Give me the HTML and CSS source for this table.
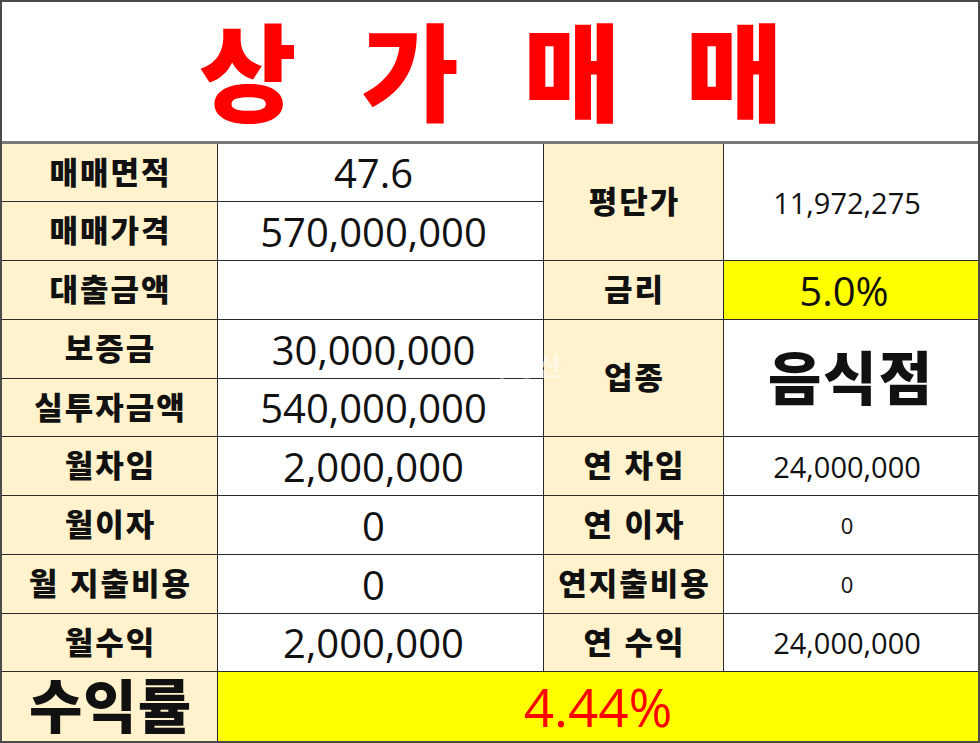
FILE: index.html
```html
<!DOCTYPE html>
<html lang="ko">
<head>
<meta charset="utf-8">
<title>상가매매</title>
<link rel="stylesheet" href="styles.css">
</head>
<body>
<div class="sheet">
  <div class="title">상 가 매 매</div>
  <div class="grid">
    <div class="lab">매매면적</div>
    <div class="val">47.6</div>
    <div class="lab tall">평단가</div>
    <div class="val small tall">11,972,275</div>

    <div class="lab">매매가격</div>
    <div class="val">570,000,000</div>

    <div class="lab">대출금액</div>
    <div class="val"></div>
    <div class="lab">금리</div>
    <div class="val yellow">5.0%</div>

    <div class="lab">보증금</div>
    <div class="val">30,000,000</div>
    <div class="lab tall">업종</div>
    <div class="val big tall">음식점</div>

    <div class="lab">실투자금액</div>
    <div class="val">540,000,000</div>

    <div class="lab">월차임</div>
    <div class="val">2,000,000</div>
    <div class="lab">연 차임</div>
    <div class="val small">24,000,000</div>

    <div class="lab">월이자</div>
    <div class="val">0</div>
    <div class="lab">연 이자</div>
    <div class="val tiny">0</div>

    <div class="lab">월 지출비용</div>
    <div class="val">0</div>
    <div class="lab">연지출비용</div>
    <div class="val tiny">0</div>

    <div class="lab">월수익</div>
    <div class="val">2,000,000</div>
    <div class="lab">연 수익</div>
    <div class="val small">24,000,000</div>

    <div class="lab huge">수익률</div>
    <div class="val yellow rate">4.44%</div>
  </div>
  <div class="watermark">부동산</div>
</div>
</body>
</html>
```

FILE: styles.css
```css
* { box-sizing: border-box; }
html, body { margin: 0; padding: 0; background: #fff; }
.sheet {
  position: relative;
  width: 980px;
  height: 743px;
  border: 2px solid #4a4a4a;
  overflow: hidden;
  display: flex;
  flex-direction: column;
}
.title {
  height: 142px;
  flex: none;
  border-bottom: 3px solid #7a7a7a;
  text-align: center;
  color: #ff0000;
  font-family: "Noto Sans CJK KR", sans-serif;
  font-weight: 900;
  font-size: 106px;
  line-height: 124px;
  letter-spacing: 14px;
  word-spacing: 7px;
  padding-top: 3px;
  padding-left: 16px;
  white-space: nowrap;
}
.grid {
  display: grid;
  grid-template-columns: 216px 326px 180px 255px;
  grid-template-rows: 58px 59px 59px 59px 58px 59px 59px 59px 58px 70px;
  width: 977px;
  flex: none;
}
.grid > div {
  border-right: 1px solid #2a2a2a;
  border-bottom: 1px solid #2a2a2a;
  display: flex;
  align-items: center;
  justify-content: center;
  white-space: nowrap;
}
.lab {
  background: #fff2cc;
  font-family: "Noto Sans CJK KR", sans-serif;
  font-weight: 900;
  font-size: 31px;
  color: #111;
  letter-spacing: 2px;
  padding-left: 2px;
  padding-bottom: 5px;
}
.val {
  background: #fff;
  font-family: "Open Sans", "Noto Sans CJK KR", sans-serif;
  font-size: 40px;
  color: #111;
  padding-right: 14px;
}
.tall { grid-row: span 2; }
.small { font-size: 29px; padding-right: 8px; }
.tiny { font-size: 22px; padding-right: 8px; }
.yellow { background: #ffff00; }
.big {
  font-family: "Noto Sans CJK KR", sans-serif;
  font-weight: 900;
  font-size: 58px;
  line-height: 1.1;
  letter-spacing: 2px;
  padding-right: 0;
  padding-bottom: 4px;
}
.huge { font-size: 58px; line-height: 1.1; letter-spacing: 1px; padding-bottom: 6px; }
.rate {
  grid-column: span 3;
  color: #ff0000;
  font-size: 53px;
  padding-right: 0;
}
.watermark {
  position: absolute;
  left: 488px;
  top: 344px;
  font-family: "Noto Sans CJK KR", sans-serif;
  font-weight: 700;
  font-size: 26px;
  color: rgba(255, 255, 255, 0.55);
}
```
